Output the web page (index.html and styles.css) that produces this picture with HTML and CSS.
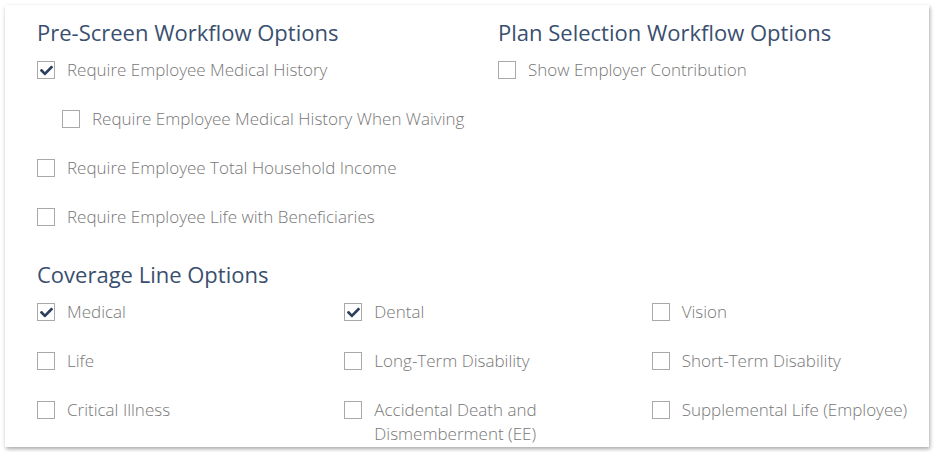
FILE: index.html
```html
<!DOCTYPE html>
<html lang="en">

<head>
    <meta charset="UTF-8">
    <meta name="viewport" content="width=device-width, initial-scale=1.0">
    <title>Workflow Options</title>
    <link rel="stylesheet" href="styles.css">
</head>

<body>
    <div class="card">
        <div class="two-col">
            <div class="section">
                <h2>Pre-Screen Workflow Options</h2>
                <label class="option"><span class="box"><svg viewBox="0 0 512 512"><path d="M173.9 439.4l-166.4-166.4c-10-10-10-26.2 0-36.2l36.2-36.2c10-10 26.2-10 36.2 0L192 312.7 432.1 72.6c10-10 26.2-10 36.2 0l36.2 36.2c10 10 10 26.2 0 36.2l-294.4 294.4c-10 10-26.2 10-36.2 0z"/></svg></span>Require Employee Medical History</label>
                <label class="option sub"><span class="box"></span>Require Employee Medical History When Waiving</label>
                <label class="option"><span class="box"></span>Require Employee Total Household Income</label>
                <label class="option"><span class="box"></span>Require Employee Life with Beneficiaries</label>
            </div>
            <div class="section">
                <h2>Plan Selection Workflow Options</h2>
                <label class="option"><span class="box"></span>Show Employer Contribution</label>
            </div>
        </div>

        <h2 class="coverage-title">Coverage Line Options</h2>
        <div class="three-col">
            <label class="option"><span class="box"><svg viewBox="0 0 512 512"><path d="M173.9 439.4l-166.4-166.4c-10-10-10-26.2 0-36.2l36.2-36.2c10-10 26.2-10 36.2 0L192 312.7 432.1 72.6c10-10 26.2-10 36.2 0l36.2 36.2c10 10 10 26.2 0 36.2l-294.4 294.4c-10 10-26.2 10-36.2 0z"/></svg></span>Medical</label>
            <label class="option"><span class="box"><svg viewBox="0 0 512 512"><path d="M173.9 439.4l-166.4-166.4c-10-10-10-26.2 0-36.2l36.2-36.2c10-10 26.2-10 36.2 0L192 312.7 432.1 72.6c10-10 26.2-10 36.2 0l36.2 36.2c10 10 10 26.2 0 36.2l-294.4 294.4c-10 10-26.2 10-36.2 0z"/></svg></span>Dental</label>
            <label class="option"><span class="box"></span>Vision</label>
            <label class="option"><span class="box"></span>Life</label>
            <label class="option"><span class="box"></span>Long-Term Disability</label>
            <label class="option"><span class="box"></span>Short-Term Disability</label>
            <label class="option"><span class="box"></span>Critical Illness</label>
            <label class="option"><span class="box"></span>Accidental Death and Dismemberment (EE)</label>
            <label class="option"><span class="box"></span>Supplemental Life (Employee)</label>
        </div>
    </div>
</body>

</html>
```

FILE: styles.css
```css
* {
    margin: 0;
    padding: 0;
    box-sizing: border-box;
}

body {
    font-family: 'Open Sans', 'Liberation Sans', sans-serif;
    background: #fff;
    color: #777;
    padding: 5px;
}

.card {
    width: 924px;
    height: 442px;
    background: #fff;
    padding: 12px 15px 0 32px;
    box-shadow: 1px 2px 4px rgba(0, 0, 0, 0.35);
    overflow: hidden;
}

h2 {
    font-weight: 400;
    font-size: 22px;
    line-height: 30px;
    color: #3a4f6f;
    margin-bottom: 11px;
}

.two-col {
    display: grid;
    grid-template-columns: minmax(0, 1fr) minmax(0, 1fr);
    column-gap: 45px;
}

.three-col {
    display: grid;
    grid-template-columns: repeat(3, minmax(0, 1fr));
    column-gap: 45px;
    row-gap: 25px;
}

.section .option + .option {
    margin-top: 25px;
}

.coverage-title {
    margin-top: 30px;
}

.option {
    display: flex;
    align-items: flex-start;
    font-size: 17px;
    font-weight: 300;
    line-height: 24px;
}

.option.sub {
    margin-left: 25px;
    white-space: nowrap;
}

.box {
    flex: none;
    width: 18px;
    height: 18px;
    margin: 3px 12px 0 0;
    border: 1px solid #a9a9a9;
    background: #fff;
    display: flex;
    align-items: center;
    justify-content: center;
}

.box svg {
    width: 13px;
    height: 13px;
    fill: #2c3f5e;
}
```
